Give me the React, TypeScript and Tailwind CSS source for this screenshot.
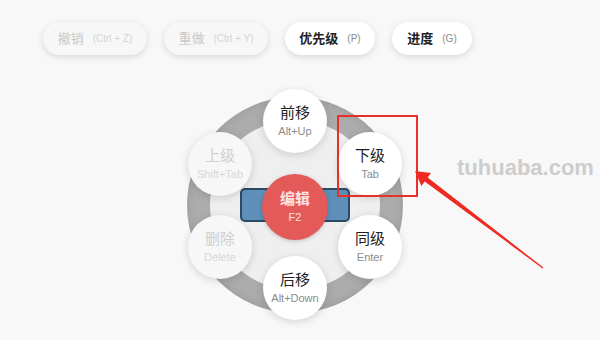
import React from "react";

const cjk = { fontFamily: '"Liberation Sans", "Noto Sans CJK SC", sans-serif' };

function TopButton({ label, keyText, enabled, width }: { label: string; keyText: string; enabled: boolean; width: string }) {
  return (
    <div
      className={`${width} h-[33px] rounded-full flex items-center justify-center gap-[9px] shadow-[0_2px_7px_rgba(0,0,0,0.13)] ${
        enabled ? "bg-white" : "bg-[#f7f7f7]"
      }`}
    >
      <span className={`text-[13px] ${enabled ? "font-bold text-[#222]" : "text-[#c9c9c9]"}`}>{label}</span>
      <span className={`text-[10px] ${enabled ? "text-[#8a8a8a]" : "text-[#d4d4d4]"}`}>{keyText}</span>
    </div>
  );
}

function Node({ label, sub, x, y, enabled }: { label: string; sub: string; x: number; y: number; enabled: boolean }) {
  return (
    <div
      className={`absolute w-[64px] h-[64px] rounded-full flex flex-col items-center justify-center shadow-[0_2px_8px_rgba(0,0,0,0.15)] ${
        enabled ? "bg-white" : "bg-[#f7f7f7]"
      }`}
      style={{ left: x - 32, top: y - 32 }}
    >
      <span className={`text-[15px] leading-[18px] ${enabled ? "text-[#222]" : "text-[#cfcfcf]"}`}>{label}</span>
      <span className={`text-[11px] leading-[14px] mt-[2px] ${enabled ? "text-[#8c8c8c]" : "text-[#d8d8d8]"}`}>{sub}</span>
    </div>
  );
}

export default function App() {
  return (
    <div className="relative w-[600px] h-[340px] bg-[#f8f8f8] overflow-hidden" style={cjk}>
      <div className="flex pt-[22px] pl-[43px] gap-[17px]">
        <TopButton label="撤销" keyText="(Ctrl + Z)" enabled={false} width="w-[104px]" />
        <TopButton label="重做" keyText="(Ctrl + Y)" enabled={false} width="w-[104px]" />
        <TopButton label="优先级" keyText="(P)" enabled={true} width="w-[90px]" />
        <TopButton label="进度" keyText="(G)" enabled={true} width="w-[80px]" />
      </div>

      <div className="relative ml-[185px] mt-[42px] w-[220px] h-[220px]">
        <div className="absolute left-[2px] top-[0px] w-[216px] h-[216px] rounded-full bg-[#acacac] shadow-[inset_0_0_10px_rgba(0,0,0,0.12)]" />
        <div className="absolute left-[25px] top-[23px] w-[170px] h-[170px] rounded-full bg-[#efefef]" />
        <div className="absolute left-[55px] top-[91px] w-[110px] h-[34px] rounded-[5px] bg-[#5d8fb8] border-2 border-[#2c4a60]" />
        <div className="absolute left-[77px] top-[77px] w-[66px] h-[66px] rounded-full bg-[#e35a58] flex flex-col items-center justify-center shadow-[0_1px_4px_rgba(0,0,0,0.2)]">
          <span className="text-[15px] leading-[18px] text-[#fbe3e3] font-bold">编辑</span>
          <span className="text-[11px] leading-[14px] mt-[2px] text-[#fbe3e3]">F2</span>
        </div>
        <Node label="前移" sub="Alt+Up" x={110} y={24} enabled={true} />
        <Node label="下级" sub="Tab" x={185} y={67} enabled={true} />
        <Node label="同级" sub="Enter" x={185} y={150} enabled={true} />
        <Node label="后移" sub="Alt+Down" x={110} y={191} enabled={true} />
        <Node label="删除" sub="Delete" x={35} y={150} enabled={false} />
        <Node label="上级" sub="Shift+Tab" x={35} y={67} enabled={false} />
      </div>

      <div className="absolute left-[337px] top-[115px] w-[81px] h-[82px] border-2 border-[#e8302a]" />

      <div
        className="absolute left-[457px] top-[155px] text-[22px] font-bold text-[#cdcdcd] leading-[26px]"
        style={{ fontFamily: '"Liberation Sans", Arial, sans-serif' }}
      >
        tuhuaba.com
      </div>

      <svg className="absolute left-0 top-0" width="600" height="340" viewBox="0 0 600 340">
        <polygon
          points="415,171 431,173.1 427.7,177.5 543.4,267.6 542.6,268.4 424.7,181.5 421.4,185.9"
          fill="#ee2b22"
        />
      </svg>
    </div>
  );
}
